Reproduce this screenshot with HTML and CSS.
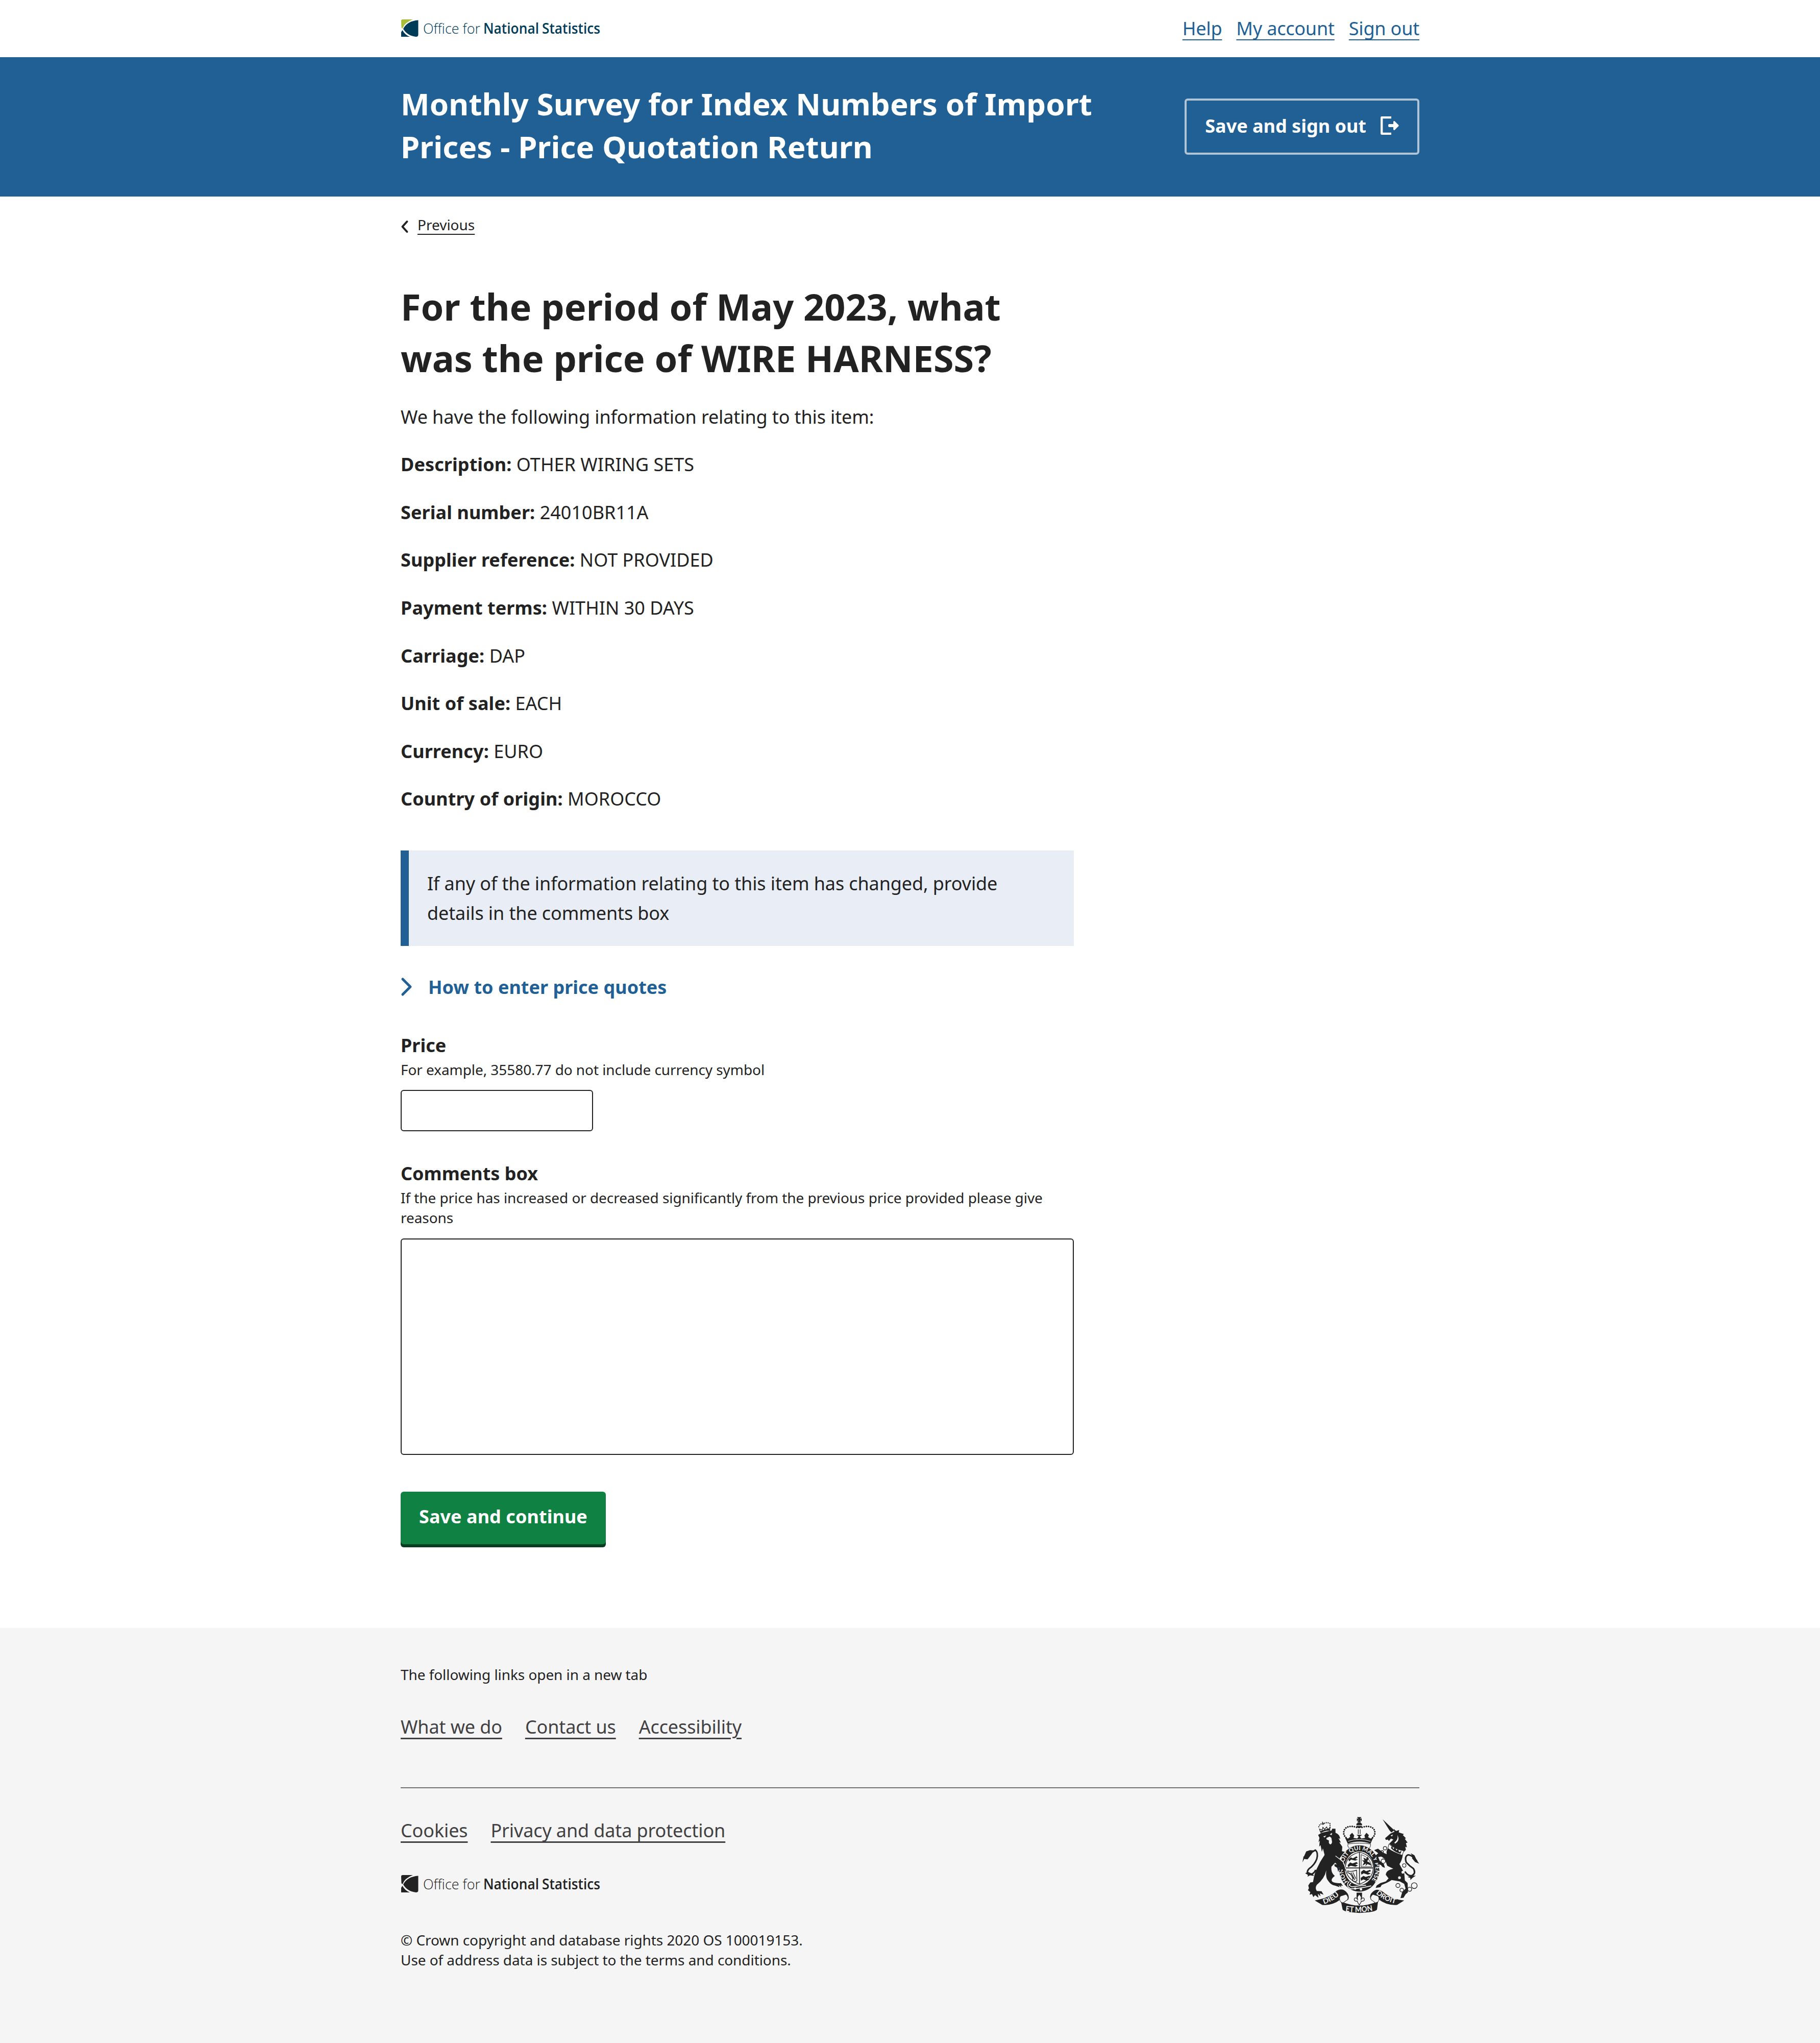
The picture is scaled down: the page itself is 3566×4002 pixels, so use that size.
FILE: index.html
```html
<!DOCTYPE html>
<html lang="en">
<head>
<meta charset="utf-8">
<title>Monthly Survey for Index Numbers of Import Prices</title>
<link rel="stylesheet" href="styles.css">
</head>
<body>
<header>
  <div class="container masthead">
    <svg class="logo" viewBox="0 0 392 36" role="img">
      <path fill="#a8bd3a" d="M1 4Q1 1 4 1H24Q8 7 3.500 19L1.500 17Z"/>
      <path fill="#003c57" d="M34.500 2.500V31Q34.500 35 30 35Q13 33 5 19.500Q13 4 34.500 2.500ZM3.500 22Q8 31 18 35H1V26Z"/>
      <g fill="#003c57">
        <text class="logo-light" x="44" y="29" textLength="112" lengthAdjust="spacingAndGlyphs">Office for</text>
        <text class="logo-bold" x="162" y="29" textLength="109" lengthAdjust="spacingAndGlyphs">National</text>
        <text class="logo-bold" x="277" y="29" textLength="114" lengthAdjust="spacingAndGlyphs">Statistics</text>
      </g>
    </svg>
    <nav class="account-nav">
      <a href="#">Help</a>
      <a href="#">My account</a>
      <a href="#">Sign out</a>
    </nav>
  </div>
  <div class="hero">
    <div class="container hero-row">
      <div class="hero-title">Monthly Survey for Index Numbers of Import Prices - Price Quotation Return</div>
      <button class="btn-ghost" type="button">Save and sign out
        <svg class="exit-icon" viewBox="0 0 36 36">
          <path fill="none" stroke="#fff" stroke-width="4.300" stroke-linejoin="round" d="M21 2.200H2.200V33.800H21"/>
          <path fill="#fff" d="M16.500 15H25V10.500Q25.500 8.500 27.500 9.300L35.300 17Q36 18 35.300 19L27.500 26.700Q25.500 27.500 25 25.500V21H16.500Q15 20.500 15 18T16.500 15Z"/>
        </svg>
      </button>
    </div>
  </div>
</header>

<main class="container">
  <div class="content">
    <div class="back">
      <svg class="back-icon" viewBox="0 0 14 24"><path d="M12 2L3 12L12 22"/></svg>
      <a href="#">Previous</a>
    </div>
    <h1>For the period of May 2023, what was the price of WIRE HARNESS?</h1>
    <p class="lead">We have the following information relating to this item:</p>
    <p><strong>Description:</strong> OTHER WIRING SETS</p>
    <p><strong>Serial number:</strong> 24010BR11A</p>
    <p><strong>Supplier reference:</strong> NOT PROVIDED</p>
    <p><strong>Payment terms:</strong> WITHIN 30 DAYS</p>
    <p><strong>Carriage:</strong> DAP</p>
    <p><strong>Unit of sale:</strong> EACH</p>
    <p><strong>Currency:</strong> EURO</p>
    <p><strong>Country of origin:</strong> MOROCCO</p>
    <div class="panel">If any of the information relating to this item has changed, provide details in the comments box</div>
    <div class="disclosure">
      <svg class="disclosure-icon" viewBox="0 0 24 36"><path d="M4 3L19 18L4 33"/></svg>
      <span>How to enter price quotes</span>
    </div>
    <div class="field">
      <label for="price">Price</label>
      <div class="hint">For example, 35580.77 do not include currency symbol</div>
      <input id="price" type="text">
    </div>
    <div class="field">
      <label for="comments">Comments box</label>
      <div class="hint">If the price has increased or decreased significantly from the previous price provided please give reasons</div>
      <textarea id="comments"></textarea>
    </div>
    <button class="btn-primary" type="button">Save and continue</button>
  </div>
</main>

<footer>
  <div class="container">
    <div class="small">The following links open in a new tab</div>
    <div class="links links-top">
      <a href="#">What we do</a>
      <a href="#">Contact us</a>
      <a href="#">Accessibility</a>
    </div>
    <div class="legal">
      <div>
        <div class="links links-legal">
          <a href="#">Cookies</a>
          <a href="#">Privacy and data protection</a>
        </div>
        <svg class="logo footer-logo" viewBox="0 0 392 36" role="img">
          <g fill="#222">
            <path d="M1 4Q1 1 4 1H24Q8 7 3.500 19L1.500 17Z"/>
            <path d="M34.500 2.500V31Q34.500 35 30 35Q13 33 5 19.500Q13 4 34.500 2.500ZM3.500 22Q8 31 18 35H1V26Z"/>
            <text class="logo-light" x="44" y="29" textLength="112" lengthAdjust="spacingAndGlyphs">Office for</text>
            <text class="logo-bold" x="162" y="29" textLength="109" lengthAdjust="spacingAndGlyphs">National</text>
            <text class="logo-bold" x="277" y="29" textLength="114" lengthAdjust="spacingAndGlyphs">Statistics</text>
          </g>
        </svg>
        <div class="small">© Crown copyright and database rights 2020 OS 100019153.<br>Use of address data is subject to the terms and conditions.</div>
      </div>
      <svg class="arms" viewBox="63 57 690 566" fill="#222">
        <defs>
          <path id="garter" d="M334 437A95 108 0 1 1 466 437"/>
          <path id="ribbon-left" d="M192 569Q245 555 288 510"/>
          <path id="ribbon-mid" d="M318 612Q400 624 484 607"/>
          <path id="ribbon-right" d="M498 507Q545 552 618 568"/>
        </defs>
        <!-- lion's crown -->
        <path d="M172 146L166 128L182 134L186 118L196 130L208 116L214 130L228 120L226 136Q195 132 172 146Z" fill="none" stroke="#222" stroke-width="4"/>
        <path d="M162 115Q170 92 186 100Q206 84 228 96V124" fill="none" stroke="#222" stroke-width="7" stroke-linecap="round" stroke-dasharray="0 11"/>
        <path d="M182 83L194 100L182 99ZM173 152Q200 134 228 138L224 128Q195 128 170 142Z"/>
        <!-- lion -->
        <path d="M158 163L178 150L238 136L240 126H260V150Q284 158 288 186L278 182L292 208L282 206L300 232L298 258L314 262L284 300L300 330L318 366L312 386L298 360L294 384L286 362L276 380L270 356L254 346V334L268 336L258 326L236 350Q232 386 256 404Q228 424 242 438Q262 448 292 446L304 462L290 460L296 472L278 458L284 470Q256 460 246 458Q228 452 210 422Q202 404 206 370Q196 420 150 456Q138 474 150 492L178 494L190 514L168 506L172 524L156 508L160 532L140 516L130 528L122 510L108 514L112 498L98 488L104 476L100 460L112 442L128 440Q138 380 150 362Q168 320 196 280L186 242L180 262L172 222L164 232L168 196L160 206L166 180Z"/>
        <path d="M188 172L206 166L196 178ZM226 160L240 150L238 164ZM208 180L226 172L236 180L240 204Q238 218 228 218Q218 212 222 196L206 188Z" fill="#f5f5f5"/>
        <path d="M72 296Q104 272 142 252Q160 266 150 304Q138 338 104 362Q86 380 104 394Q130 398 144 368" fill="none" stroke="#222" stroke-width="9"/>
        <path d="M66 324L70 300L88 260L110 252L134 254L118 278L96 306L76 304ZM82 388L98 380L126 392L134 404L110 400L96 408L98 398Z"/>
        <!-- unicorn -->
        <path d="M537 71L606 136L588 148L576 134Z"/>
        <path d="M552 182L584 154L606 144L602 126L616 140L634 134L632 148L662 158L656 164L674 182L668 186L684 208L674 210L680 236L670 232L674 250L662 262Q606 244 576 214L600 190L586 184L574 198L568 190L556 192Z"/>
        <path d="M584 166L598 160L592 172ZM606 208Q630 190 624 164Q642 196 610 214Z" fill="#f5f5f5"/>
        <path d="M568 240L656 278Q652 312 636 334L664 386L668 430L684 446L686 500L672 512L660 532L642 534L652 500L672 478L664 450L638 436L590 428Q568 444 532 456L524 470L496 474L502 460L524 446L556 436L572 418L556 398Q556 370 600 362L564 344L550 304L530 290L510 292L520 316L544 334L550 356L536 350L526 338L514 336L504 314L498 282L512 270L496 258L488 252L510 244L538 266L562 276Q556 262 568 240Z"/>
        <path d="M574 216Q610 248 662 256L652 282Q602 266 568 242Z" fill="#f5f5f5" stroke="#222" stroke-width="3"/>
        <path d="M586 240L592 226L600 246L610 234L618 254L628 244L634 264L648 256L642 274Q606 262 586 240Z"/>
        <path d="M738 316Q708 278 686 280Q664 290 676 324Q696 346 718 360Q734 386 712 400Q690 410 668 378" fill="none" stroke="#222" stroke-width="9"/>
        <path d="M702 270L724 282L736 308L752 332L728 322L710 300L712 288ZM684 410L704 402L732 402L714 414L700 428L700 416Z"/>
        <g fill="none" stroke="#222" stroke-width="4">
          <circle cx="551" cy="241" r="10"/><circle cx="541" cy="317" r="13"/><circle cx="534" cy="263" r="8"/>
          <circle cx="627" cy="460" r="12"/><circle cx="650" cy="487" r="11"/><circle cx="696" cy="482" r="12"/><circle cx="723" cy="461" r="17"/><circle cx="664" cy="342" r="10"/>
        </g>
        <g fill="#f5f5f5"><circle cx="656" cy="382" r="8"/><circle cx="636" cy="414" r="8"/><circle cx="664" cy="342" r="8"/></g>
        <!-- royal crown -->
        <path d="M387 58H412L404 72L414 64V82L404 76L410 88H388L396 76L386 82V64L396 72ZM383 98Q399 80 416 98V106H383ZM383 110H416Q412 122 399 123Q386 122 383 110Z"/>
        <path d="M394 130V158M405 130V158" stroke="#222" stroke-width="4"/>
        <path d="M384 118Q340 104 316 126Q296 160 328 184M416 118Q458 104 484 126Q504 160 472 184" fill="none" stroke="#222" stroke-width="10" stroke-linecap="round" stroke-dasharray="0 13"/>
        <path d="M316 178L334 184L346 174L344 164L358 150L370 166L366 180L388 184L396 173L384 162H416L403 173L412 184L434 180L430 166L442 150L456 164L452 176L466 184L482 178L466 214Q400 190 332 214Z"/>
        <path d="M334 200Q400 178 466 200" fill="none" stroke="#f5f5f5" stroke-width="3"/>
        <path d="M334 216Q400 206 466 216Q468 234 456 242Q400 220 344 242Q328 232 334 216Z" fill="#f5f5f5" stroke="#222" stroke-width="3"/>
        <!-- garter and shield -->
        <ellipse cx="400" cy="360" rx="119" ry="136"/>
        <ellipse cx="400" cy="358" rx="86" ry="99" fill="#f5f5f5"/>
        <path d="M319 360V345Q325 284 401 264Q478 284 482 345V360Q478 424 401 452Q325 424 319 360Z" fill="none" stroke="#222" stroke-width="4"/>
        <path d="M401 264V452M319 357H482" stroke="#222" stroke-width="5"/>
        <path d="M336 306L350 294L362 300L384 288L390 296L376 304L392 308L376 314L352 308L340 318ZM332 340L346 324L360 330L384 322L392 330L376 336L392 342L378 350L350 344L334 352ZM410 380L426 368L440 376L464 368L468 376L450 382L468 390L450 396L426 388L412 396ZM408 416L424 404L438 410L460 402L464 410L446 418L460 424L444 432L424 424L410 432ZM418 344L428 324L416 310L430 314L424 296L440 304L448 290L456 302L446 318L462 326L470 342L448 334L436 346L440 330Z"/>
        <path d="M411 350V278Q466 296 473 350Z" fill="none" stroke="#222" stroke-width="3"/>
        <path d="M332 374Q350 382 384 370L386 432Q374 442 362 432Q364 396 332 384ZM352 384L374 428M362 382L380 420M344 386L366 420" fill="none" stroke="#222" stroke-width="4"/>
        <path d="M342 436Q324 450 334 468L350 480Q402 478 470 462M352 444L340 458L356 468Q402 460 440 458" fill="none" stroke="#f5f5f5" stroke-width="5"/>
        <g fill="#f5f5f5"><circle cx="376" cy="478" r="7"/><circle cx="410" cy="483" r="7"/></g>
        <text class="motto garter-text"><textPath href="#garter" textLength="478" lengthAdjust="spacingAndGlyphs">HONI SOIT QUI MAL Y PENSE</textPath></text>
        <path d="M260 286L306 322L322 366" fill="none" stroke="#f5f5f5" stroke-width="4"/>
        <path d="M264 292L302 322L318 366L312 386L298 360L290 384L280 350Z"/>
        <path d="M488 252L510 244L538 266L530 290L510 292L520 316L544 334L550 356L536 350L526 338L514 336L504 314L498 282L512 270Z"/>
        <!-- motto ribbon -->
        <path d="M138 548L166 542Q230 528 268 490Q300 474 322 496Q344 518 336 542L308 560Q400 596 492 560L466 540Q456 516 480 496Q502 474 534 494Q580 534 636 544L664 548L622 574Q560 578 512 540L504 602Q490 618 401 621Q316 618 302 602L290 542Q240 580 182 574Z"/>
        <path d="M290 556Q278 536 290 522L322 512Q340 528 330 544L304 562ZM510 556Q522 536 510 522L480 512Q460 528 470 544L496 562Z" fill="#f5f5f5" stroke="#222" stroke-width="3"/>
        <path d="M384 502H416V534H384Z"/>
        <path d="M400 510L412 528L410 542Q424 524 430 540Q430 554 412 552L408 562L400 574L392 562L388 552Q370 554 370 540Q376 524 390 542L388 528Z" fill="#f5f5f5" stroke="#222" stroke-width="4"/>
        <text class="motto"><textPath href="#ribbon-left" textLength="106" lengthAdjust="spacingAndGlyphs">DIEU</textPath></text>
        <text class="motto motto-mid"><textPath href="#ribbon-mid" textLength="162" lengthAdjust="spacingAndGlyphs">ET MON</textPath></text>
        <text class="motto"><textPath href="#ribbon-right" textLength="130" lengthAdjust="spacingAndGlyphs">DROIT</textPath></text>
      </svg>
    </div>
  </div>
</footer>
</body>
</html>
```
FILE: styles.css
```css
* { box-sizing: border-box; }
body {
  margin: 0;
  background: #fff;
  color: #222;
  font: 36px/1.6 "Noto Sans", "Open Sans", sans-serif;
}
svg { display: block; overflow: visible; }
a { color: inherit; text-underline-offset: 8px; text-decoration-thickness: 2px; }
.container { width: 1996px; margin: 0 auto; }

.masthead { height: 112px; display: flex; justify-content: space-between; align-items: center; }
.logo { width: 392px; height: 36px; margin-bottom: 2px; }
.logo text { font-family: "Open Sans", "Noto Sans", sans-serif; font-size: 28px; }
.logo .logo-light { font-weight: 350; }
.logo .logo-bold { font-weight: 600; }
.account-nav { display: flex; gap: 28px; color: #206095; letter-spacing: -0.2px; }

.hero { background: #206095; color: #fff; height: 273px; padding-top: 48px; }
.hero-row { display: flex; justify-content: space-between; align-items: flex-start; }
.hero-title { width: 1400px; padding-top: 1px; font-size: 60px; font-weight: 700; line-height: 84px; letter-spacing: 0.1px; }
.btn-ghost {
  display: flex; align-items: center; gap: 28px;
  height: 110px; margin-top: 33px; padding: 0 36px 2px;
  border: 4px solid #b0c4d8; border-radius: 6px;
  background: none; color: #fff; font: inherit; font-weight: 700;
}
.exit-icon { width: 36px; height: 36px; margin-top: -2px; }

.content { width: 1319px; padding-top: 36px; }
.back { display: flex; align-items: center; gap: 18px; font-size: 28px; line-height: 39px; }
.back a { text-underline-offset: 7px; }
.back-icon { width: 15px; height: 24px; margin-top: 6px; }
.back-icon path, .disclosure-icon path { fill: none; stroke: #222; stroke-width: 4; stroke-linecap: round; stroke-linejoin: round; }
h1 { margin: 90px 0 36px; font-size: 72px; line-height: 1.4; font-weight: 700; }
p { margin: 0 0 36px; }
strong { letter-spacing: 0.08px; }
.lead, .panel { letter-spacing: -0.12px; }
.panel { margin-top: 72px; padding: 36px; border-left: 16px solid #206095; background: #e9eef6; }
.disclosure { display: flex; align-items: center; gap: 30px; margin-top: 52px; color: #206095; font-weight: 700; }
.disclosure-icon { width: 24px; height: 36px; margin-top: -2px; }
.disclosure-icon path { stroke: #206095; stroke-width: 5; }
.field { margin-top: 54px; }
.disclosure + .field { margin-top: 56px; }
label { display: block; font-weight: 700; }
.hint, .small { font-size: 28px; line-height: 1.4; letter-spacing: -0.07px; }
input, textarea { display: block; margin: 0; border: 2px solid #222; border-radius: 6px; background: #fff; font: inherit; resize: none; }
input { width: 377px; height: 81px; margin-top: 19px; }
textarea { width: 100%; height: 424px; margin-top: 21px; }
.btn-primary {
  display: block; height: 103px; margin-top: 72px; padding: 0 36px 6px;
  border: 0; border-radius: 6px; background: #0f8243; box-shadow: 0 6px 0 #073d20;
  color: #fff; font: inherit; font-weight: 700; letter-spacing: 0.05px;
}

footer { margin-top: 164px; padding-top: 72px; height: 813px; background: #f5f5f5; }
.links { display: flex; gap: 45px; color: #414042; letter-spacing: -0.13px; }
.links a { text-underline-offset: 8px; text-decoration-thickness: 3px; }
.links-legal a { text-decoration-skip-ink: none; }
.links-top { margin-top: 53px; padding-bottom: 90px; border-bottom: 2px solid #707071; }
.legal { display: flex; justify-content: space-between; padding-top: 54px; }
.footer-logo { margin: 57px 0 73px; }
.arms { width: 230px; height: 189px; margin-top: 2px; }
.motto { font: 700 40px Lato, "Noto Sans", sans-serif; fill: #f5f5f5; }
.motto-mid { font-size: 46px; }
.garter-text { font-size: 34px; }
```
